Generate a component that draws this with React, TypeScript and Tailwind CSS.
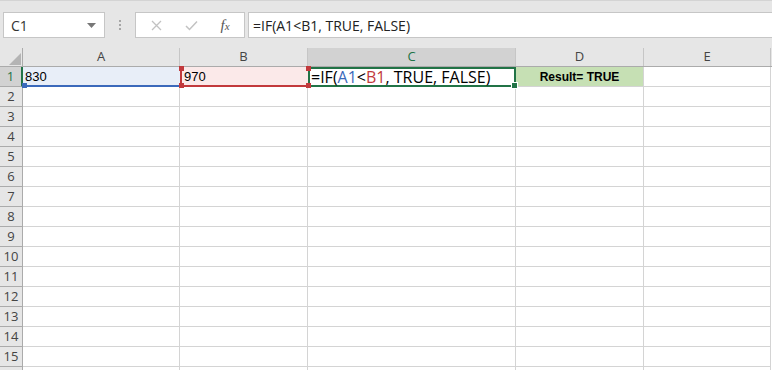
import React from 'react';

const cols = [
  { key: 'A', w: 'w-[157px]' },
  { key: 'B', w: 'w-[128px]' },
  { key: 'C', w: 'w-[208px]' },
  { key: 'D', w: 'w-[128px]' },
  { key: 'E', w: 'w-[127px]' },
];

// row 16 only peeks in at the bottom edge, so it gets no label
const rows = Array.from({ length: 16 }, (_, i) => i + 1);

const Handle: React.FC<{ className: string }> = ({ className }) => (
  <span className={`absolute w-[5px] h-[5px] ${className}`} />
);

const App: React.FC = () => {
  return (
    <div className="w-[772px] h-[370px] overflow-hidden bg-white font-['Open_Sans',sans-serif] text-[#333]">
      {/* Formula bar */}
      <div className="h-[48px] bg-[#e6e6e6] border-t border-[#d4d4d4] flex items-start pt-[11px] pl-[3px]">
        <div className="w-[102px] h-[26px] bg-white border border-[#c6c6c6] flex items-center justify-between pl-[7px] pr-[8px]">
          <span className="text-[14px] text-[#333]">C1</span>
          <svg width="9" height="5" viewBox="0 0 9 5">
            <polygon points="0,0 9,0 4.5,5" fill="#777" />
          </svg>
        </div>
        <div className="w-[30px] h-[26px] flex flex-col items-center justify-center gap-[2px]">
          <span className="w-[2px] h-[2px] bg-[#a6a6a6]" />
          <span className="w-[2px] h-[2px] bg-[#a6a6a6]" />
          <span className="w-[2px] h-[2px] bg-[#a6a6a6]" />
        </div>
        <div className="w-[110px] h-[26px] bg-white border border-[#c6c6c6] flex items-center">
          <div className="w-[38px] flex justify-center pl-[2px]">
            <svg width="11" height="11" viewBox="0 0 11 11">
              <path d="M1 1 L10 10 M10 1 L1 10" stroke="#c2c2c2" strokeWidth="1.3" />
            </svg>
          </div>
          <div className="w-[34px] flex justify-center">
            <svg width="13" height="11" viewBox="0 0 13 11">
              <path d="M1 6 L4.5 9.5 L12 1.5" stroke="#c2c2c2" strokeWidth="1.5" fill="none" />
            </svg>
          </div>
          <div className="w-[34px] flex justify-center">
            <span className="font-['Liberation_Serif',serif] italic text-[15px] text-[#555] leading-none">
              f<span className="text-[11px]">x</span>
            </span>
          </div>
        </div>
        <div className="flex-1 ml-[3px] h-[26px] bg-white border-y border-l border-[#c6c6c6] flex items-center pl-[4px]">
          <span className="text-[14px] text-[#222]">=IF(A1&lt;B1, TRUE, FALSE)</span>
        </div>
      </div>

      {/* Column headers */}
      <div className="flex h-[19px] bg-[#e6e6e6] border-b border-[#ababab]">
        <div className="w-[23px] relative border-r border-[#ababab]">
          <svg className="absolute left-0 top-0" width="23" height="19" viewBox="0 0 23 19">
            <polygon points="21,5 21,17 9,17" fill="#b4b4b4" />
          </svg>
        </div>
        {cols.map((c) =>
          c.key === 'C' ? (
            <div
              key={c.key}
              className={`${c.w} bg-[#d2d2d2] border-r border-[#c6c6c6] flex items-center justify-center text-[13px] text-[#217346]`}
            >
              {c.key}
            </div>
          ) : (
            <div
              key={c.key}
              className={`${c.w} border-r border-[#c6c6c6] flex items-center justify-center text-[13px] text-[#444]`}
            >
              {c.key}
            </div>
          )
        )}
      </div>

      {/* Grid rows */}
      {rows.map((r) => (
        <div key={r} className="flex h-[20px]">
          {r === 1 ? (
            <div className="w-[23px] h-[20px] bg-[#d2d2d2] border-r-2 border-r-[#217346] border-b border-[#ababab] flex items-center justify-center text-[13px] text-[#217346]">
              1
            </div>
          ) : (
            <div className="w-[23px] h-[20px] bg-[#e6e6e6] border-r border-b border-[#ababab] flex items-center justify-center text-[13px] text-[#444]">
              {r < 16 ? r : ''}
            </div>
          )}
          {r === 1 ? (
            <>
              <div className="w-[157px] h-[20px] relative bg-[#e8eef8] border-b-2 border-[#3b69bb] flex items-center pl-[2px] pt-[2px] text-[13px] font-['Liberation_Sans',sans-serif] text-black">
                830
                <Handle className="bg-[#3b69bb] -left-[1px] -bottom-[3px]" />
              </div>
              <div className="w-[128px] h-[20px] relative bg-[#fbe9e9] border-l-2 border-b-2 border-[#c2393c] flex items-center pl-[2px] pt-[2px] text-[13px] font-['Liberation_Sans',sans-serif] text-black">
                970
                <Handle className="bg-[#c2393c] -left-[3px] -top-[1px]" />
                <Handle className="bg-[#c2393c] -left-[3px] -bottom-[3px]" />
                <Handle className="bg-[#c2393c] -right-[3px] -top-[1px] z-10" />
                <Handle className="bg-[#c2393c] -right-[3px] -bottom-[3px] z-10" />
              </div>
              <div className="w-[208px] h-[20px] relative border-2 border-[#217346] flex items-center pl-[1px] text-[16px] text-black leading-none">
                <span>
                  =IF(<span className="text-[#3b69bb]">A1</span>&lt;<span className="text-[#c2393c]">B1</span>, TRUE, FALSE)
                </span>
                <Handle className="bg-[#217346] border border-white -right-[4px] -bottom-[4px] w-[7px] h-[7px] z-10" />
              </div>
              <div className="w-[128px] h-[20px] bg-[#c6e0b4] border-r border-b border-[#d4d4d4] flex items-center justify-center text-[12px] font-bold font-['Liberation_Sans',sans-serif] text-black">
                Result= TRUE
              </div>
              <div className="w-[127px] h-[20px] border-r border-b border-[#d4d4d4]" />
            </>
          ) : (
            cols.map((c) => (
              <div key={c.key} className={`${c.w} h-[20px] border-r border-b border-[#d4d4d4]`} />
            ))
          )}
        </div>
      ))}
    </div>
  );
};

export default App;
